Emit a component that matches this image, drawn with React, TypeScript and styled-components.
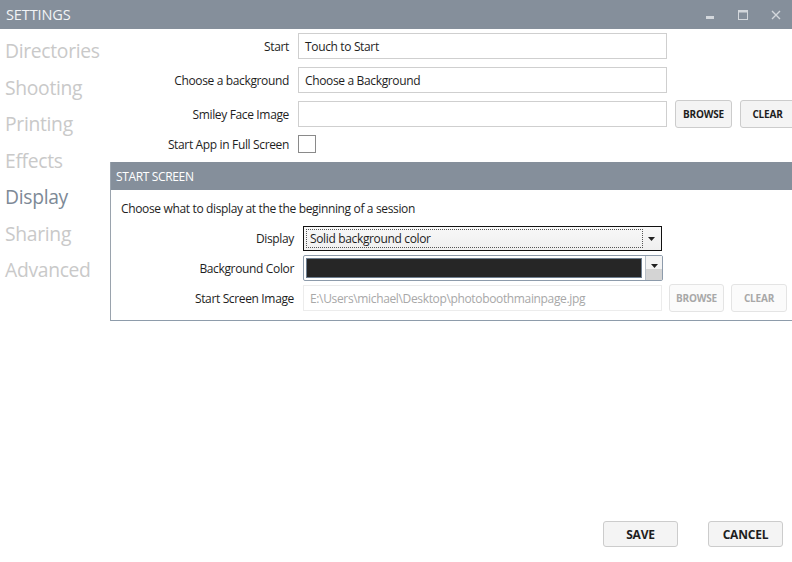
import React, { FC } from 'react';
import styled, { createGlobalStyle } from 'styled-components';

const GlobalStyle = createGlobalStyle`
  html, body {
    margin: 0;
    padding: 0;
    background: #ffffff;
  }
  body {
    font-family: "Open Sans", "Noto Sans", sans-serif;
    color: #1e1e1e;
  }
`;

const Window = styled.div`
  width: 792px;
  height: 562px;
  display: flex;
  flex-direction: column;
  background: #fff;
  overflow: hidden;
`;

const TitleBar = styled.div`
  height: 29px;
  flex: none;
  background: #858f9b;
  display: flex;
  align-items: center;
  padding-left: 6px;
  color: #f2f4f6;
  font-size: 14.5px;
  letter-spacing: -0.1px;
`;

const Title = styled.div`
  flex: 1;
`;

const WinButton = styled.div`
  width: 33px;
  height: 29px;
  display: flex;
  align-items: center;
  justify-content: center;
`;

const Body = styled.div`
  flex: 1;
  display: flex;
`;

const Nav = styled.nav`
  width: 110px;
  flex: none;
  display: flex;
  flex-direction: column;
  padding-top: 7px;
`;

const NavItem = styled.div<{ $active?: boolean }>`
  height: 36.5px;
  line-height: 30px;
  padding-left: 5px;
  font-size: 19.3px;
  letter-spacing: -0.3px;
  color: ${(p) => (p.$active ? '#7d8996' : '#c9c9c9')};
`;

const Content = styled.div`
  flex: 1;
  display: flex;
  flex-direction: column;
`;

const TopForm = styled.div`
  display: flex;
  flex-direction: column;
  gap: 8px;
  padding-top: 4px;
  padding-bottom: 9px;
`;

const Row = styled.div<{ $labelWidth: number }>`
  display: grid;
  grid-template-columns: ${(p) => p.$labelWidth}px 1fr;
  column-gap: 9px;
  align-items: center;
`;

const Field = styled.div<{ $gap: number }>`
  display: flex;
  align-items: center;
  gap: ${(p) => p.$gap}px;
`;

const Label = styled.label`
  text-align: right;
  font-size: 12px;
  letter-spacing: -0.35px;
  color: #1e1e1e;
`;

const TextBox = styled.div<{ $w: number; $disabled?: boolean }>`
  width: ${(p) => p.$w}px;
  height: 26px;
  flex: none;
  box-sizing: border-box;
  border: 1px solid ${(p) => (p.$disabled ? '#ececec' : '#cfcfcf')};
  padding: 0 6px;
  display: flex;
  align-items: center;
  font-size: 12px;
  letter-spacing: -0.35px;
  color: ${(p) => (p.$disabled ? '#a8a8a8' : '#1e1e1e')};
  background: #fff;
  white-space: nowrap;
`;

const Button = styled.button<{ $w: number; $disabled?: boolean; $big?: boolean }>`
  width: ${(p) => p.$w}px;
  height: ${(p) => (p.$big ? 26 : 28)}px;
  margin: ${(p) => (p.$big ? '0' : '-1px 0')};
  flex: none;
  box-sizing: border-box;
  border: 1px solid ${(p) => (p.$disabled ? '#e4e4e4' : '#cccccc')};
  border-radius: 3px;
  background: ${(p) => (p.$disabled ? '#fbfbfb' : '#f4f4f4')};
  font-family: "Open Sans", "Noto Sans", sans-serif;
  font-weight: bold;
  font-size: ${(p) => (p.$big ? 12 : 10)}px;
  letter-spacing: -0.2px;
  color: ${(p) => (p.$disabled ? '#a8a8a8' : '#1e1e1e')};
  padding: 0;
`;

const CheckBox = styled.div`
  width: 18px;
  height: 18px;
  box-sizing: border-box;
  border: 1px solid #8a8a8a;
  background: #fff;
`;

const Panel = styled.section`
  box-sizing: border-box;
  border-left: 1px solid #9aa3ad;
  border-bottom: 1px solid #8e9cab;
  display: flex;
  flex-direction: column;
`;

const PanelHeader = styled.div`
  height: 28px;
  background: #858f9b;
  color: #fff;
  font-size: 12px;
  letter-spacing: -0.35px;
  display: flex;
  align-items: center;
  padding-left: 5px;
`;

const PanelBody = styled.div`
  padding: 10px 0 9px 10px;
  display: flex;
  flex-direction: column;
  gap: 4px;
`;

const Hint = styled.div`
  font-size: 12px;
  letter-spacing: -0.35px;
  margin-bottom: 5px;
`;

const Select = styled.div`
  width: 359px;
  height: 25px;
  box-sizing: border-box;
  border: 1px solid #111;
  background: linear-gradient(#f8f8f8, #efefef);
  display: flex;
  align-items: center;
  padding: 2px;
`;

const FocusText = styled.div`
  flex: 1;
  height: 100%;
  box-sizing: border-box;
  border: 1px dotted #555;
  display: flex;
  align-items: center;
  padding-left: 3px;
  font-size: 12px;
  letter-spacing: -0.35px;
`;

const Arrow = styled.div`
  width: 16px;
  display: flex;
  justify-content: center;
`;

const ColorPicker = styled.div`
  width: 360px;
  height: 26px;
  box-sizing: border-box;
  border: 1px solid #8d9bab;
  border-radius: 2px;
  display: flex;
  align-items: stretch;
  padding: 2px 0 2px 2px;
  background: #fff;
`;

const Swatch = styled.div<{ $color: string }>`
  flex: 1;
  background: ${(p) => p.$color};
  border: 1px solid #6f7f90;
`;

const DropButton = styled.div`
  width: 17px;
  margin-left: 3px;
  margin-top: -2px;
  margin-bottom: -2px;
  border-left: 1px solid #b8c0c8;
  background: linear-gradient(#f4f4f4 0%, #f4f4f4 55%, #d4d4d4 56%, #d4d4d4 100%);
  display: flex;
  justify-content: center;
  padding-top: 8px;
  box-sizing: border-box;
`;

const Spacer = styled.div`
  flex: 1;
`;

const Footer = styled.div`
  display: flex;
  justify-content: flex-end;
  gap: 30px;
  padding: 0 12px 15px 0;
`;

const Down: FC = () => (
  <svg width={7} height={4} viewBox="0 0 7 4">
    <path d="M0 0 H7 L3.5 4 Z" fill="#222" />
  </svg>
);

const App: FC = () => {
  const nav = ['Directories', 'Shooting', 'Printing', 'Effects', 'Display', 'Sharing', 'Advanced'];

  return (
    <>
      <GlobalStyle />
      <Window>
        <TitleBar>
          <Title>SETTINGS</Title>
          <WinButton>
            <svg width="10" height="10" viewBox="0 0 10 10">
              <rect x="1" y="6" width="8" height="3" fill="#d3d7dc" />
            </svg>
          </WinButton>
          <WinButton>
            <svg width="10" height="10" viewBox="0 0 10 10">
              <rect x="0.5" y="0.5" width="9" height="9" fill="none" stroke="#d3d7dc" />
              <rect x="0" y="0" width="10" height="2.5" fill="#d3d7dc" />
            </svg>
          </WinButton>
          <WinButton>
            <svg width="10" height="10" viewBox="0 0 10 10">
              <path d="M1 1 L9 9 M9 1 L1 9" stroke="#d3d7dc" strokeWidth="1.4" />
            </svg>
          </WinButton>
        </TitleBar>
        <Body>
          <Nav>
            {nav.map((n) => (
              <NavItem key={n} $active={n === 'Display'}>
                {n}
              </NavItem>
            ))}
          </Nav>
          <Content>
            <TopForm>
              <Row $labelWidth={179}>
                <Label>Start</Label>
                <Field $gap={8}>
                  <TextBox $w={369}>Touch to Start</TextBox>
                </Field>
              </Row>
              <Row $labelWidth={179}>
                <Label>Choose a background</Label>
                <Field $gap={8}>
                  <TextBox $w={369}>Choose a Background</TextBox>
                </Field>
              </Row>
              <Row $labelWidth={179}>
                <Label>Smiley Face Image</Label>
                <Field $gap={8}>
                  <TextBox $w={369}></TextBox>
                  <Button $w={57}>BROWSE</Button>
                  <Button $w={55}>CLEAR</Button>
                </Field>
              </Row>
              <Row $labelWidth={179}>
                <Label>Start App in Full Screen</Label>
                <Field $gap={8}>
                  <CheckBox />
                </Field>
              </Row>
            </TopForm>
            <Panel>
              <PanelHeader>START SCREEN</PanelHeader>
              <PanelBody>
                <Hint>Choose what to display at the the beginning of a session</Hint>
                <Row $labelWidth={173}>
                  <Label>Display</Label>
                  <Field $gap={7}>
                    <Select>
                      <FocusText>Solid background color</FocusText>
                      <Arrow>
                        <Down />
                      </Arrow>
                    </Select>
                  </Field>
                </Row>
                <Row $labelWidth={173}>
                  <Label>Background Color</Label>
                  <Field $gap={7}>
                    <ColorPicker>
                      <Swatch $color="#262626" />
                      <DropButton>
                        <Down />
                      </DropButton>
                    </ColorPicker>
                  </Field>
                </Row>
                <Row $labelWidth={173}>
                  <Label>Start Screen Image</Label>
                  <Field $gap={7}>
                    <TextBox $w={359} $disabled>
                      E:\Users\michael\Desktop\photoboothmainpage.jpg
                    </TextBox>
                    <Button $w={55} $disabled>BROWSE</Button>
                    <Button $w={56} $disabled>CLEAR</Button>
                  </Field>
                </Row>
              </PanelBody>
            </Panel>
            <Spacer />
            <Footer>
              <Button $w={75} $big>SAVE</Button>
              <Button $w={75} $big>CANCEL</Button>
            </Footer>
          </Content>
        </Body>
      </Window>
    </>
  );
};

export default App;
